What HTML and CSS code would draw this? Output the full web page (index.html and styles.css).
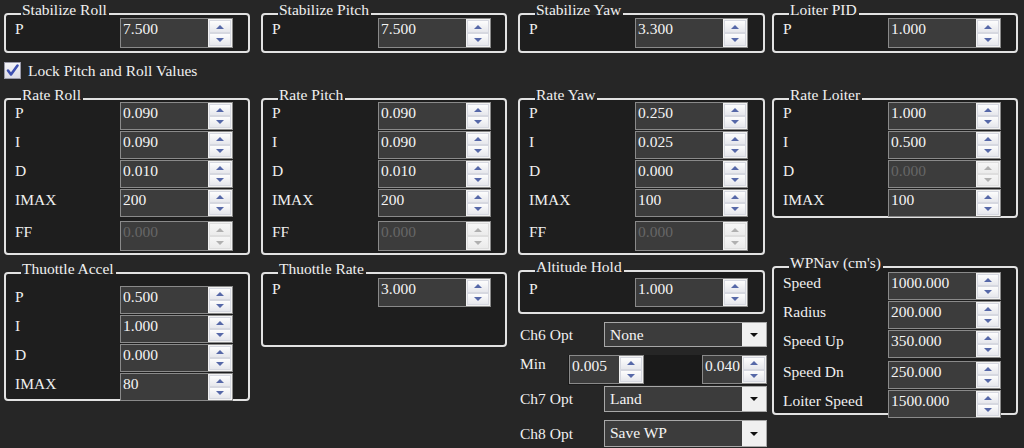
FILE: index.html
```html
<!DOCTYPE html>
<html>
<head>
<meta charset="utf-8">
<link rel="stylesheet" href="styles.css">
</head>
<body>
<div class="page">
  <!-- Column 1 -->
  <div class="col">
    <section class="group g-stab">
      <div class="group-title">Stabilize Roll</div>
      <div class="body pad-3">
        <div class="row row-30"><span class="lbl">P</span>
          <div class="spin h30"><div class="spin-val">7.500</div><div class="spin-btns"><span class="btn"><i class="up"></i></span><span class="btn"><i class="down"></i></span></div></div></div>
      </div>
    </section>
    <label class="check"><span class="box"><svg width="15" height="15" viewBox="0 0 15 15"><path d="M3 7.5 L6 11.5 L12.5 2.5" fill="none" stroke="#3d4fb0" stroke-width="2.6" stroke-linecap="round" stroke-linejoin="round"/></svg></span><span class="check-txt">Lock Pitch and Roll Values</span></label>
    <section class="group g-rate m-19">
      <div class="group-title">Rate Roll</div>
      <div class="body pad-2">
        <div class="row"><span class="lbl">P</span><div class="spin"><div class="spin-val">0.090</div><div class="spin-btns"><span class="btn"><i class="up"></i></span><span class="btn"><i class="down"></i></span></div></div></div>
        <div class="row"><span class="lbl">I</span><div class="spin"><div class="spin-val">0.090</div><div class="spin-btns"><span class="btn"><i class="up"></i></span><span class="btn"><i class="down"></i></span></div></div></div>
        <div class="row"><span class="lbl">D</span><div class="spin"><div class="spin-val">0.010</div><div class="spin-btns"><span class="btn"><i class="up"></i></span><span class="btn"><i class="down"></i></span></div></div></div>
        <div class="row"><span class="lbl">IMAX</span><div class="spin"><div class="spin-val">200</div><div class="spin-btns"><span class="btn"><i class="up"></i></span><span class="btn"><i class="down"></i></span></div></div></div>
        <div class="row row-ff"><span class="lbl">FF</span><div class="spin h30 disabled"><div class="spin-val">0.000</div><div class="spin-btns"><span class="btn"><i class="up"></i></span><span class="btn"><i class="down"></i></span></div></div></div>
      </div>
    </section>
    <section class="group g-taccel m-17">
      <div class="group-title">Thuottle Accel</div>
      <div class="body pad-12">
        <div class="row"><span class="lbl">P</span><div class="spin"><div class="spin-val">0.500</div><div class="spin-btns"><span class="btn"><i class="up"></i></span><span class="btn"><i class="down"></i></span></div></div></div>
        <div class="row"><span class="lbl">I</span><div class="spin"><div class="spin-val">1.000</div><div class="spin-btns"><span class="btn"><i class="up"></i></span><span class="btn"><i class="down"></i></span></div></div></div>
        <div class="row"><span class="lbl">D</span><div class="spin"><div class="spin-val">0.000</div><div class="spin-btns"><span class="btn"><i class="up"></i></span><span class="btn"><i class="down"></i></span></div></div></div>
        <div class="row"><span class="lbl">IMAX</span><div class="spin"><div class="spin-val">80</div><div class="spin-btns"><span class="btn"><i class="up"></i></span><span class="btn"><i class="down"></i></span></div></div></div>
      </div>
    </section>
  </div>

  <!-- Column 2 -->
  <div class="col col-wide">
    <section class="group g-stab">
      <div class="group-title">Stabilize Pitch</div>
      <div class="body pad-3">
        <div class="row row-30"><span class="lbl">P</span>
          <div class="spin h30"><div class="spin-val">7.500</div><div class="spin-btns"><span class="btn"><i class="up"></i></span><span class="btn"><i class="down"></i></span></div></div></div>
      </div>
    </section>
    <section class="group g-rate m-45">
      <div class="group-title">Rate Pitch</div>
      <div class="body pad-2">
        <div class="row"><span class="lbl">P</span><div class="spin"><div class="spin-val">0.090</div><div class="spin-btns"><span class="btn"><i class="up"></i></span><span class="btn"><i class="down"></i></span></div></div></div>
        <div class="row"><span class="lbl">I</span><div class="spin"><div class="spin-val">0.090</div><div class="spin-btns"><span class="btn"><i class="up"></i></span><span class="btn"><i class="down"></i></span></div></div></div>
        <div class="row"><span class="lbl">D</span><div class="spin"><div class="spin-val">0.010</div><div class="spin-btns"><span class="btn"><i class="up"></i></span><span class="btn"><i class="down"></i></span></div></div></div>
        <div class="row"><span class="lbl">IMAX</span><div class="spin"><div class="spin-val">200</div><div class="spin-btns"><span class="btn"><i class="up"></i></span><span class="btn"><i class="down"></i></span></div></div></div>
        <div class="row row-ff"><span class="lbl">FF</span><div class="spin h30 disabled"><div class="spin-val">0.000</div><div class="spin-btns"><span class="btn"><i class="up"></i></span><span class="btn"><i class="down"></i></span></div></div></div>
      </div>
    </section>
    <section class="group g-trate m-17">
      <div class="group-title">Thuottle Rate</div>
      <div class="body pad-4">
        <div class="row"><span class="lbl">P</span><div class="spin h29"><div class="spin-val">3.000</div><div class="spin-btns"><span class="btn"><i class="up"></i></span><span class="btn"><i class="down"></i></span></div></div></div>
      </div>
    </section>
  </div>

  <!-- Column 3 -->
  <div class="col col-wide col-3">
    <section class="group g-stab">
      <div class="group-title">Stabilize Yaw</div>
      <div class="body pad-3">
        <div class="row row-30"><span class="lbl">P</span>
          <div class="spin h30"><div class="spin-val">3.300</div><div class="spin-btns"><span class="btn"><i class="up"></i></span><span class="btn"><i class="down"></i></span></div></div></div>
      </div>
    </section>
    <section class="group g-rate m-45">
      <div class="group-title">Rate Yaw</div>
      <div class="body pad-2">
        <div class="row"><span class="lbl">P</span><div class="spin"><div class="spin-val">0.250</div><div class="spin-btns"><span class="btn"><i class="up"></i></span><span class="btn"><i class="down"></i></span></div></div></div>
        <div class="row"><span class="lbl">I</span><div class="spin"><div class="spin-val">0.025</div><div class="spin-btns"><span class="btn"><i class="up"></i></span><span class="btn"><i class="down"></i></span></div></div></div>
        <div class="row"><span class="lbl">D</span><div class="spin"><div class="spin-val">0.000</div><div class="spin-btns"><span class="btn"><i class="up"></i></span><span class="btn"><i class="down"></i></span></div></div></div>
        <div class="row"><span class="lbl">IMAX</span><div class="spin"><div class="spin-val">100</div><div class="spin-btns"><span class="btn"><i class="up"></i></span><span class="btn"><i class="down"></i></span></div></div></div>
        <div class="row row-ff"><span class="lbl">FF</span><div class="spin h30 disabled"><div class="spin-val">0.000</div><div class="spin-btns"><span class="btn"><i class="up"></i></span><span class="btn"><i class="down"></i></span></div></div></div>
      </div>
    </section>
    <section class="group g-alt m-15">
      <div class="group-title">Altitude Hold</div>
      <div class="body pad-6">
        <div class="row"><span class="lbl">P</span><div class="spin h29"><div class="spin-val">1.000</div><div class="spin-btns"><span class="btn"><i class="up"></i></span><span class="btn"><i class="down"></i></span></div></div></div>
      </div>
    </section>
    <div class="opt-row m-8"><span class="opt-lbl">Ch6 Opt</span><div class="combo"><span class="combo-val">None</span><span class="combo-arrow"><i></i></span></div></div>
    <div class="min-row">
      <span class="min-lbl">Min</span>
      <div class="min-panel">
        <div class="spin small-1"><div class="spin-val">0.005</div><div class="spin-btns"><span class="btn"><i class="up"></i></span><span class="btn"><i class="down"></i></span></div></div>
        <div class="spin small-2"><div class="spin-val">0.040</div><div class="spin-btns"><span class="btn"><i class="up"></i></span><span class="btn"><i class="down"></i></span></div></div>
      </div>
    </div>
    <div class="opt-row m-1 h26"><span class="opt-lbl">Ch7 Opt</span><div class="combo"><span class="combo-val">Land</span><span class="combo-arrow"><i></i></span></div></div>
    <div class="opt-row m-8 h27"><span class="opt-lbl">Ch8 Opt</span><div class="combo"><span class="combo-val">Save WP</span><span class="combo-arrow"><i></i></span></div></div>
  </div>

  <!-- Column 4 -->
  <div class="col col-4">
    <section class="group g-stab">
      <div class="group-title">Loiter PID</div>
      <div class="body pad-3">
        <div class="row row-30"><span class="lbl">P</span>
          <div class="spin h30"><div class="spin-val">1.000</div><div class="spin-btns"><span class="btn"><i class="up"></i></span><span class="btn"><i class="down"></i></span></div></div></div>
      </div>
    </section>
    <section class="group g-rloiter m-45">
      <div class="group-title">Rate Loiter</div>
      <div class="body pad-2">
        <div class="row"><span class="lbl">P</span><div class="spin"><div class="spin-val">1.000</div><div class="spin-btns"><span class="btn"><i class="up"></i></span><span class="btn"><i class="down"></i></span></div></div></div>
        <div class="row"><span class="lbl">I</span><div class="spin"><div class="spin-val">0.500</div><div class="spin-btns"><span class="btn"><i class="up"></i></span><span class="btn"><i class="down"></i></span></div></div></div>
        <div class="row"><span class="lbl">D</span><div class="spin disabled"><div class="spin-val">0.000</div><div class="spin-btns"><span class="btn"><i class="up"></i></span><span class="btn"><i class="down"></i></span></div></div></div>
        <div class="row"><span class="lbl">IMAX</span><div class="spin"><div class="spin-val">100</div><div class="spin-btns"><span class="btn"><i class="up"></i></span><span class="btn"><i class="down"></i></span></div></div></div>
      </div>
    </section>
    <section class="group g-wpnav m-48">
      <div class="group-title">WPNav (cm's)</div>
      <div class="body pad-4">
        <div class="row"><span class="lbl">Speed</span><div class="spin"><div class="spin-val">1000.000</div><div class="spin-btns"><span class="btn"><i class="up"></i></span><span class="btn"><i class="down"></i></span></div></div></div>
        <div class="row"><span class="lbl">Radius</span><div class="spin"><div class="spin-val">200.000</div><div class="spin-btns"><span class="btn"><i class="up"></i></span><span class="btn"><i class="down"></i></span></div></div></div>
        <div class="row"><span class="lbl">Speed Up</span><div class="spin"><div class="spin-val">350.000</div><div class="spin-btns"><span class="btn"><i class="up"></i></span><span class="btn"><i class="down"></i></span></div></div></div>
        <div class="row row-gap"><span class="lbl">Speed Dn</span><div class="spin"><div class="spin-val">250.000</div><div class="spin-btns"><span class="btn"><i class="up"></i></span><span class="btn"><i class="down"></i></span></div></div></div>
        <div class="row"><span class="lbl">Loiter Speed</span><div class="spin"><div class="spin-val">1500.000</div><div class="spin-btns"><span class="btn"><i class="up"></i></span><span class="btn"><i class="down"></i></span></div></div></div>
      </div>
    </section>
  </div>
</div>
</body>
</html>
```

FILE: styles.css
```css
* { box-sizing: border-box; }

html, body {
  margin: 0;
  padding: 0;
  background: #262626;
}

body {
  width: 1024px;
  height: 448px;
  overflow: hidden;
}

.page {
  display: flex;
  align-items: flex-start;
  padding-left: 4px;
  color: #f0f0f0;
  font-family: "Liberation Serif", serif;
  font-size: 15.5px;
  line-height: 18px;
}

.col {
  flex: none;
  width: 246px;
  display: flex;
  flex-direction: column;
  padding-top: 13px;
}

.col + .col { margin-left: 11px; }
.col-3 { width: 247px; }
.col-4 { margin-left: 7px !important; }

/* group boxes */
.group {
  border: 2px solid #e2e2e2;
  border-radius: 4px;
  background: #1e1e1e;
  padding-left: 9px;
  flex: none;
}

.group-title {
  width: max-content;
  margin: -14px 0 -4px 6px;
  padding: 0 2px 0 1px;
  line-height: 18px;
  white-space: nowrap;
  background: linear-gradient(#262626 0 14px, #1e1e1e 14px);
}

.g-stab { height: 40px; }
.g-rate { height: 157px; }
.g-taccel { height: 129px; }
.g-trate { height: 75px; }
.g-alt { height: 44px; }
.g-rloiter { height: 120px; }
.g-wpnav { height: 149px; }

.m-1 { margin-top: 1px; }
.m-8 { margin-top: 8px; }
.m-15 { margin-top: 15px; }
.m-17 { margin-top: 17px; }
.m-19 { margin-top: 19px; }
.m-45 { margin-top: 45px; }
.m-48 { margin-top: 48px; }

.pad-2 { padding-top: 2px; }
.pad-3 { padding-top: 3px; }
.pad-4 { padding-top: 4px; }
.pad-6 { padding-top: 6px; }
.pad-12 { padding-top: 12px; }

.row {
  display: flex;
  align-items: flex-start;
  height: 29px;
}
.row-30 { height: 30px; }
.row-ff { margin-top: 3px; }
.row-gap { margin-top: 2px; }

.lbl {
  flex: none;
  width: 105px;
  padding-top: 2px;
  white-space: nowrap;
}
.col-wide .lbl { width: 106px; }

/* numeric spinner */
.spin {
  flex: none;
  display: flex;
  width: 113px;
  height: 28px;
  border: 1px solid #8a8a8a;
  background: #3c3c3c;
}
.h29 { height: 29px; }
.h30 { height: 30px; }

.spin-val {
  flex: 1;
  min-width: 0;
  padding: 1px 0 0 2px;
  color: #f4f4f4;
  white-space: nowrap;
  overflow: hidden;
}

.spin-btns {
  flex: none;
  width: 24px;
  display: flex;
  flex-direction: column;
  padding: 1px;
  background: #f2f2f2;
}

.btn {
  flex: 1;
  display: flex;
  align-items: center;
  justify-content: center;
  border: 1px solid #d6d8e0;
  background: linear-gradient(#fdfdfd, #e6e7ec);
}

.up, .down {
  display: block;
  width: 0;
  height: 0;
  border-left: 4px solid transparent;
  border-right: 4px solid transparent;
}
.up { border-bottom: 4px solid #5668a8; }
.down { border-top: 4px solid #5668a8; }

.disabled .spin-val { color: #666666; }
.disabled .up { border-bottom-color: #b0b0b0; }
.disabled .down { border-top-color: #b0b0b0; }
.disabled .btn { background: linear-gradient(#f6f6f6, #ebebeb); border-color: #dedede; }

/* checkbox */
.check {
  display: flex;
  align-items: center;
  margin-top: 9px;
  height: 17px;
  white-space: nowrap;
}
.check .box {
  flex: none;
  width: 17px;
  height: 17px;
  margin-right: 7px;
  border: 1px solid #9a9aa8;
  background: linear-gradient(#f4f4f8, #dcdce6);
  display: flex;
  align-items: center;
  justify-content: center;
}

/* combos */
.opt-row {
  display: flex;
  align-items: center;
  height: 25px;
  width: 249px;
}
.h26 { height: 26px; }
.h27 { height: 27px; }

.opt-lbl {
  flex: none;
  width: 86px;
  padding-left: 2px;
  white-space: nowrap;
}

.combo {
  flex: none;
  display: flex;
  width: 163px;
  height: 100%;
  border: 1px solid #a8a8a8;
  background: #3c3c3c;
}
.combo-val {
  flex: 1;
  padding: 3px 0 0 5px;
  color: #f4f4f4;
}
.combo-arrow {
  flex: none;
  width: 24px;
  display: flex;
  align-items: center;
  justify-content: center;
  background: #f0f0f0;
}
.combo-arrow i {
  display: block;
  width: 0;
  height: 0;
  border-left: 4px solid transparent;
  border-right: 4px solid transparent;
  border-top: 4px solid #111111;
}

/* min row */
.min-row {
  display: flex;
  margin-top: 8px;
  height: 30px;
  width: 249px;
}
.min-lbl {
  flex: none;
  width: 50px;
  padding-left: 2px;
}
.min-panel {
  flex: none;
  display: flex;
  justify-content: space-between;
  width: 199px;
  height: 30px;
  background: #1a1a1a;
}
.min-panel .spin { height: 29px; }
.small-1 { width: 75px; margin-left: 1px; }
.small-2 { width: 65px; }
```
